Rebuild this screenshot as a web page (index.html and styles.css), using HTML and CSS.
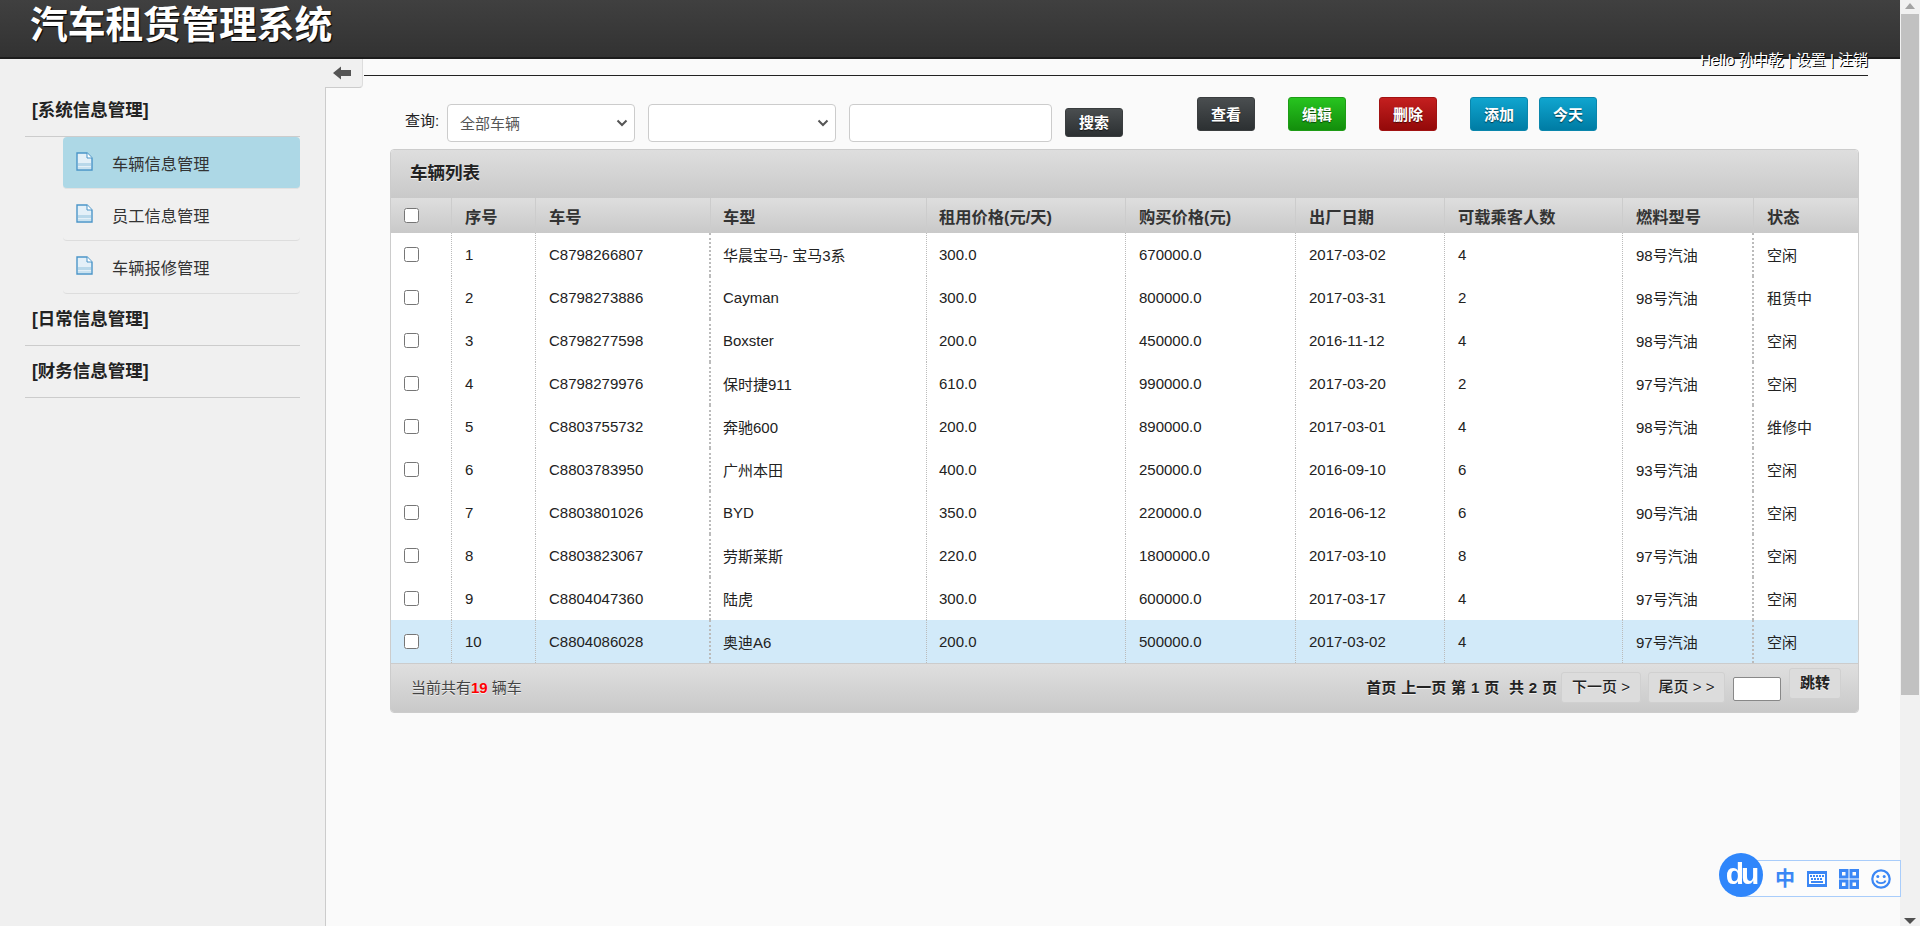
FILE: index.html
```html
<!DOCTYPE html>
<html lang="zh-CN">
<head>
<meta charset="utf-8">
<title>汽车租赁管理系统</title>
<link rel="stylesheet" href="styles.css">
</head>
<body>
<div class="page">
  <div class="viewport">
    <header class="header"><h1 class="brand">汽车租赁管理系统</h1></header>
    <div class="body">
      <aside class="sidebar">
        <div class="group">[系统信息管理]</div>
        <ul class="menu">
          <li class="menu-item active"><svg class="doc" viewBox="0 0 17 19"><path d="M1 1h10l5 5v12H1z" fill="#e4f0f8" stroke="#4b95c8" stroke-width="1.4"/><path d="M11 1v5h5" fill="#fff" stroke="#4b95c8"/><path d="M2 11h13v3H2z" fill="#b9d8ea"/><path d="M2 15h13v2H2z" fill="#c9e2f0"/></svg><span>车辆信息管理</span></li>
          <li class="menu-item"><svg class="doc" viewBox="0 0 17 19"><path d="M1 1h10l5 5v12H1z" fill="#e4f0f8" stroke="#4b95c8" stroke-width="1.4"/><path d="M11 1v5h5" fill="#fff" stroke="#4b95c8"/><path d="M2 11h13v3H2z" fill="#b9d8ea"/><path d="M2 15h13v2H2z" fill="#c9e2f0"/></svg><span>员工信息管理</span></li>
          <li class="menu-item"><svg class="doc" viewBox="0 0 17 19"><path d="M1 1h10l5 5v12H1z" fill="#e4f0f8" stroke="#4b95c8" stroke-width="1.4"/><path d="M11 1v5h5" fill="#fff" stroke="#4b95c8"/><path d="M2 11h13v3H2z" fill="#b9d8ea"/><path d="M2 15h13v2H2z" fill="#c9e2f0"/></svg><span>车辆报修管理</span></li>
        </ul>
        <div class="group">[日常信息管理]</div>
        <div class="group">[财务信息管理]</div>
      </aside>
      <main class="main">
        <div class="topbar">
          <div class="toggle"><svg class="toggle-arrow" viewBox="0 0 18 14"><path d="M0 7l8-6.500v3.500h10v6H8v3.500z" fill="#555"/></svg></div>
          <div class="userbar">Hello 孙中乾 | 设置 | 注销</div>
        </div>
        <div class="content">
          <div class="filters">
            <label class="filter-label">查询:</label>
            <select class="field select-a"><option>全部车辆</option></select>
            <select class="field select-b"><option></option></select>
            <input class="field text-input" type="text">
            <button class="btn btn-dark btn-search">搜索</button>
            <button class="btn btn-dark btn-view">查看</button>
            <button class="btn btn-green btn-edit">编辑</button>
            <button class="btn btn-red btn-del">删除</button>
            <button class="btn btn-blue btn-add">添加</button>
            <button class="btn btn-blue btn-today">今天</button>
          </div>
          <section class="panel">
            <div class="panel-title">车辆列表</div>
            <table class="grid">
              <thead>
                <tr><th><input class="check" type="checkbox"></th><th>序号</th><th>车号</th><th>车型</th><th>租用价格(元/天)</th><th>购买价格(元)</th><th>出厂日期</th><th>可载乘客人数</th><th>燃料型号</th><th>状态</th></tr>
              </thead>
              <tbody>
                <tr><td><input class="check" type="checkbox"></td><td>1</td><td>C8798266807</td><td>华晨宝马- 宝马3系</td><td>300.0</td><td>670000.0</td><td>2017-03-02</td><td>4</td><td>98号汽油</td><td>空闲</td></tr>
                <tr><td><input class="check" type="checkbox"></td><td>2</td><td>C8798273886</td><td>Cayman</td><td>300.0</td><td>800000.0</td><td>2017-03-31</td><td>2</td><td>98号汽油</td><td>租赁中</td></tr>
                <tr><td><input class="check" type="checkbox"></td><td>3</td><td>C8798277598</td><td>Boxster</td><td>200.0</td><td>450000.0</td><td>2016-11-12</td><td>4</td><td>98号汽油</td><td>空闲</td></tr>
                <tr><td><input class="check" type="checkbox"></td><td>4</td><td>C8798279976</td><td>保时捷911</td><td>610.0</td><td>990000.0</td><td>2017-03-20</td><td>2</td><td>97号汽油</td><td>空闲</td></tr>
                <tr><td><input class="check" type="checkbox"></td><td>5</td><td>C8803755732</td><td>奔驰600</td><td>200.0</td><td>890000.0</td><td>2017-03-01</td><td>4</td><td>98号汽油</td><td>维修中</td></tr>
                <tr><td><input class="check" type="checkbox"></td><td>6</td><td>C8803783950</td><td>广州本田</td><td>400.0</td><td>250000.0</td><td>2016-09-10</td><td>6</td><td>93号汽油</td><td>空闲</td></tr>
                <tr><td><input class="check" type="checkbox"></td><td>7</td><td>C8803801026</td><td>BYD</td><td>350.0</td><td>220000.0</td><td>2016-06-12</td><td>6</td><td>90号汽油</td><td>空闲</td></tr>
                <tr><td><input class="check" type="checkbox"></td><td>8</td><td>C8803823067</td><td>劳斯莱斯</td><td>220.0</td><td>1800000.0</td><td>2017-03-10</td><td>8</td><td>97号汽油</td><td>空闲</td></tr>
                <tr><td><input class="check" type="checkbox"></td><td>9</td><td>C8804047360</td><td>陆虎</td><td>300.0</td><td>600000.0</td><td>2017-03-17</td><td>4</td><td>97号汽油</td><td>空闲</td></tr>
                <tr class="selected"><td><input class="check" type="checkbox"></td><td>10</td><td>C8804086028</td><td>奥迪A6</td><td>200.0</td><td>500000.0</td><td>2017-03-02</td><td>4</td><td>97号汽油</td><td>空闲</td></tr>
              </tbody>
            </table>
            <div class="panel-foot">
              <div class="total">当前共有<b class="count">19</b> 辆车</div>
              <div class="pager">
                <span class="pager-text">首页 上一页 第 1 页 &nbsp;共 2 页</span>
                <a class="page-btn next">下一页 &gt;</a>
                <a class="page-btn last">尾页 &gt; &gt;</a>
                <input class="page-input" type="text">
                <a class="page-btn jump">跳转</a>
              </div>
            </div>
          </section>
        </div>
      </main>
    </div>
  </div>
  <div class="scrollbar">
    <span class="arrow-up"></span>
    <div class="thumb"></div>
    <span class="arrow-down"></span>
  </div>
</div>
<div class="ime">
  <div class="ime-logo">du</div>
  <div class="ime-bar">
    <span class="ime-zh">中</span>
    <svg class="ime-icon" width="20" height="16" viewBox="0 0 20 16"><path d="M0 0h20v16H0z" fill="#3b87f5"/><path d="M2 3h16v10H2z" fill="#fff"/><path d="M3 4h2v2H3zM6 4h2v2H6zM9 4h2v2H9zM12 4h2v2h-2zM15 4h2v2h-2zM4 7h2v2H4zM7 7h2v2H7zM10 7h2v2h-2zM13 7h2v2h-2zM4 10h12v2H4z" fill="#3b87f5"/></svg>
    <svg class="ime-icon" width="20" height="20" viewBox="0 0 20 20"><path d="M1.500 1.500h6.500v6.500H1.500zM12 1.500h6.500v6.500H12zM1.500 12h6.500v6.500H1.500zM12 12h6.500v6.500H12z" fill="none" stroke="#3b87f5" stroke-width="3"/></svg>
    <svg class="ime-icon" width="20" height="20" viewBox="0 0 20 20"><circle cx="10" cy="10" r="8.700" fill="none" stroke="#3b87f5" stroke-width="2.200"/><circle cx="6.800" cy="7.500" r="1.500" fill="#3b87f5"/><circle cx="13.200" cy="7.500" r="1.500" fill="#3b87f5"/><path d="M5.500 11.500c1 3.500 8 3.500 9 0" fill="none" stroke="#3b87f5" stroke-width="1.800"/></svg>
  </div>
</div>
</body>
</html>
```
FILE: styles.css
```css
* { box-sizing: border-box; }
html, body { margin: 0; height: 100%; overflow: hidden; }
body {
  font-family: "Liberation Sans", "Noto Sans CJK SC", sans-serif;
  font-size: 15px;
  color: #222;
  background: #fafafa;
}
.page { display: flex; height: 926px; }
.viewport { flex: 1; min-width: 0; display: flex; flex-direction: column; }

.header {
  height: 59px;
  flex: none;
  background: linear-gradient(#404040, #323232);
  border-bottom: 2px solid #1c1c1c;
}
.brand {
  margin: 0;
  padding-left: 30px;
  font-size: 37.800px;
  line-height: 50px;
  font-weight: 700;
  color: #fff;
  text-shadow: 1px 1px 1px #000;
}

.body { flex: 1; display: flex; min-height: 0; }
.sidebar {
  width: 326px;
  flex: none;
  padding: 26px 25px 0;
  background: #f0f0f0;
  border-right: 1px solid #ccc;
}
.group {
  height: 52px;
  line-height: 50px;
  padding-left: 7px;
  font-size: 17.500px;
  font-weight: 700;
  color: #222;
  border-bottom: 1px solid #ccc;
}
.menu { list-style: none; margin: 0 0 0 38px; padding: 0; }
.menu-item {
  display: flex;
  align-items: flex-start;
  height: 52px;
  padding: 15px 0 0 13px;
  font-size: 16.250px;
  color: #333;
  line-height: 24px;
  border-bottom: 1px solid #ddd;
  border-radius: 4px;
}
.menu-item:last-child { height: 53px; }
.menu-item.active { background: #add8e6; border-bottom-color: #e2e2e2; }
.doc { width: 17px; height: 19px; flex: none; margin-right: 19px; }

.main { flex: 1; min-width: 0; display: flex; flex-direction: column; }
.topbar { display: flex; align-items: flex-start; height: 29px; padding-right: 32px; }
.toggle {
  width: 38px;
  height: 29px;
  margin-left: -1px;
  flex: none;
  display: flex;
  align-items: center;
  justify-content: center;
  background: #f0f0f0;
  border-right: 1px solid #ddd;
  border-bottom: 1px solid #ccc;
  border-bottom-right-radius: 4px;
}
.toggle-arrow { width: 18px; height: 14px; margin-right: 4px; }
.userbar {
  flex: 1;
  position: relative;
  height: 24px;
  margin: -7px 0 0 1px;
  text-align: right;
  font-size: 15px;
  line-height: 16px;
  color: #fff;
  text-shadow: 1px 1px 0 #000;
  border-bottom: 1px solid #222;
}

.content { padding: 0 41px 0 64px; }
.filters { display: flex; align-items: flex-start; height: 45px; margin-top: 9px; padding-left: 15px; }
.filter-label { width: 42px; margin-top: 15px; font-size: 15px; line-height: 18px; color: #222; }
.field {
  height: 38px;
  margin-top: 7px;
  border: 1px solid #ccc;
  border-radius: 4px;
  background-color: #fff;
  font-family: inherit;
  font-size: 15px;
  color: #555;
}
.select-a, .select-b {
  width: 188px;
  padding-left: 12px;
  appearance: none;
  background-image: url("data:image/svg+xml,%3Csvg xmlns='http://www.w3.org/2000/svg' width='12' height='8' viewBox='0 0 12 8'%3E%3Cpath d='M1.500 1.500L6 6l4.500-4.500' fill='none' stroke='%23555' stroke-width='2'/%3E%3C/svg%3E");
  background-repeat: no-repeat;
  background-position: right 6px center;
}
.select-b { margin-left: 13px; }
.text-input { width: 203px; margin-left: 13px; }
.btn {
  width: 58px;
  height: 34px;
  padding: 0 0 2px;
  color: #fff;
  font-family: inherit;
  font-size: 15px;
  font-weight: 700;
  border-radius: 3px;
  border: 1px solid #333;
  text-shadow: 0 1px 1px rgba(0,0,0,.6);
  flex: none;
}
.btn-dark { background: linear-gradient(#4a4e50, #2c3032); border-color: #3a3d3f; }
.btn-green { background: linear-gradient(#27c41f, #138e0c); border-color: #1e9c16; }
.btn-red { background: linear-gradient(#c41f1f, #930909); border-color: #a11212; }
.btn-blue { background: linear-gradient(#10a5cf, #007ca4); border-color: #0a86ac; }
.btn-search { margin: 11px 0 0 13px; height: 29px; }
.btn-view { margin-left: 74px; }
.btn-edit { margin-left: 33px; }
.btn-del { margin-left: 33px; }
.btn-add { margin-left: 33px; }
.btn-today { margin-left: 11px; }

.panel {
  margin-top: 7px;
  border: 1px solid #ccc;
  border-radius: 4px;
  overflow: hidden;
  background: #fff;
}
.panel-title {
  height: 48px;
  padding-left: 19px;
  line-height: 46px;
  font-size: 17.500px;
  font-weight: 700;
  color: #222;
  background: linear-gradient(#dedede, #c9c9c9);
  text-shadow: 0 1px 0 #eee;
}
.grid { width: 100%; border-collapse: separate; border-spacing: 0; table-layout: fixed; }
.grid th:nth-child(1) { width: 61px; }
.grid th:nth-child(2) { width: 84px; }
.grid th:nth-child(3) { width: 175px; }
.grid th:nth-child(4) { width: 216px; }
.grid th:nth-child(5) { width: 199px; }
.grid th:nth-child(6) { width: 170px; }
.grid th:nth-child(7) { width: 149px; }
.grid th:nth-child(8) { width: 178px; }
.grid th:nth-child(9) { width: 131px; }
.grid th { 
  height: 35px;
  padding: 0 0 0 13px;
  text-align: left;
  font-size: 16.250px;
  font-weight: 700;
  color: #333;
  background: linear-gradient(#dedede, #c9c9c9);
  border-right: 1px solid #ccc;
}
.grid th:last-child, .grid td:last-child { border-right: 0; }
.grid td {
  height: 43px;
  padding: 0 0 0 13px;
  font-size: 15px;
  color: #222;
  border-right: 1px dotted #bbb;
}
.grid th:nth-child(4), .grid td:nth-child(4),
.grid th:nth-child(5), .grid td:nth-child(5) { padding-left: 12px; }
.grid td:nth-child(3) { border-right-width: 2px; }
.grid td:nth-child(9) { border-right-width: 2px; }
.selected td { background: #d2eaf9; }
.check { display: block; width: 15px; height: 15px; margin: 0; }

.panel-foot {
  height: 49px;
  display: flex;
  justify-content: space-between;
  align-items: flex-start;
  padding: 0 17px 0 20px;
  border-top: 1px solid #ccc;
  background: linear-gradient(#dfdfdf, #c9c9c9);
}
.total { margin-top: 14px; font-size: 15px; line-height: 20px; color: #444; text-shadow: 0 1px 0 #eee; }
.count { color: #f00; }
.pager { display: flex; align-items: flex-start; }
.pager-text { margin-top: 14px; line-height: 20px; font-size: 15px; font-weight: 700; word-spacing: 0.700px; color: #222; white-space: nowrap; margin-right: 4px; text-shadow: 0 1px 0 #eee; }
.page-btn {
  height: 31px;
  margin-top: 8px;
  line-height: 27px;
  text-align: center;
  font-size: 15px;
  font-weight: 500;
  color: #222;
  background: #dcdcdc;
  border: 1px solid #d0d0d0;
  border-radius: 3px;
  text-shadow: 0 1px 0 #eee;
}
.next { width: 80px; }
.last { width: 77px; margin-left: 7px; }
.page-input { width: 48px; height: 24px; margin: 13px 0 0 8px; border: 1px solid #888; border-radius: 2px; background: #fff; }
.jump { width: 52px; margin: 4px 0 0 8px; line-height: 28px; font-weight: 700; }

.scrollbar {
  width: 20px;
  flex: none;
  height: 926px;
  display: flex;
  flex-direction: column;
  align-items: center;
  background: #f1f1f1;
}
.arrow-up { width: 0; height: 0; margin-top: 3px; border: 5px solid transparent; border-top: 0; border-bottom: 6px solid #a3a3a3; }
.thumb { width: 18px; height: 681px; margin-top: 5px; background: #c1c1c1; }
.arrow-down { width: 0; height: 0; margin-top: auto; margin-bottom: 2px; border: 6px solid transparent; border-bottom: 0; border-top: 6px solid #505050; }

.ime { position: fixed; left: 1719px; top: 853px; width: 182px; height: 44px; }
.ime-logo {
  position: absolute;
  left: 0;
  top: 0;
  z-index: 1;
  width: 44px;
  height: 44px;
  border-radius: 50%;
  background: #2f86fb;
  color: #fff;
  text-align: center;
  font-size: 30px;
  font-weight: 700;
  line-height: 42px;
  letter-spacing: -3px;
}
.ime-bar {
  position: absolute;
  right: 0;
  top: 7px;
  width: 165px;
  height: 37px;
  display: flex;
  align-items: center;
  gap: 12px;
  padding-left: 38px;
  background: #fcfcfc;
  border: 1px solid #a9cdfb;
}
.ime-zh { font-size: 20px; font-weight: 700; color: #3b87f5; line-height: 24px; }
.ime-icon { flex: none; }
```
